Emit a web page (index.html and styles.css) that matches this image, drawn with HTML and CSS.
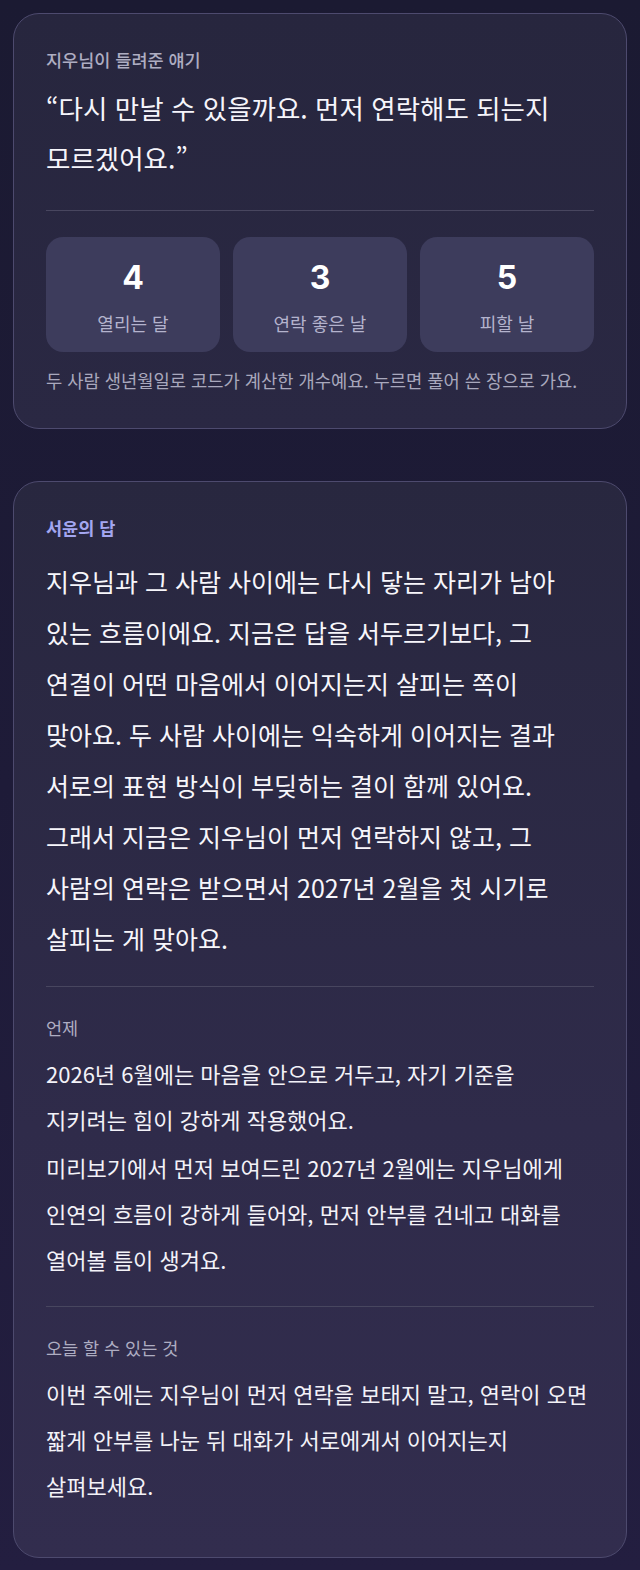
FILE: index.html
```html
<!DOCTYPE html>
<html lang="ko">
<head>
<meta charset="utf-8">
<link rel="stylesheet" href="styles.css">
</head>
<body>
<main class="page">
  <section class="card">
    <p class="label">지우님이 들려준 얘기</p>
    <p class="quote">“다시 만날 수 있을까요. 먼저 연락해도 되는지 모르겠어요.”</p>
    <hr class="divider divider-top">
    <div class="stats">
      <div class="stat"><span class="num">4</span><span class="stat-label">열리는 달</span></div>
      <div class="stat"><span class="num">3</span><span class="stat-label">연락 좋은 날</span></div>
      <div class="stat"><span class="num">5</span><span class="stat-label">피할 날</span></div>
    </div>
    <p class="note">두 사람 생년월일로 코드가 계산한 개수예요. 누르면 풀어 쓴 장으로 가요.</p>
  </section>

  <section class="card card-answer">
    <p class="label label-accent">서윤의 답</p>
    <p class="lead">지우님과 그 사람 사이에는 다시 닿는 자리가 남아 있는 흐름이에요. 지금은 답을 서두르기보다, 그 연결이 어떤 마음에서 이어지는지 살피는 쪽이 맞아요. 두 사람 사이에는 익숙하게 이어지는 결과 서로의 표현 방식이 부딪히는 결이 함께 있어요. 그래서 지금은 지우님이 먼저 연락하지 않고, 그 사람의 연락은 받으면서 2027년 2월을 첫 시기로 살피는 게 맞아요.</p>
    <hr class="divider">
    <div class="section">
      <p class="label label-sub">언제</p>
      <p class="body">2026년 6월에는 마음을 안으로 거두고, 자기 기준을 지키려는 힘이 강하게 작용했어요.</p>
      <p class="body">미리보기에서 먼저 보여드린 2027년 2월에는 지우님에게 인연의 흐름이 강하게 들어와, 먼저 안부를 건네고 대화를 열어볼 틈이 생겨요.</p>
    </div>
    <hr class="divider">
    <div class="section">
      <p class="label label-sub">오늘 할 수 있는 것</p>
      <p class="body">이번 주에는 지우님이 먼저 연락을 보태지 말고, 연락이 오면 짧게 안부를 나눈 뒤 대화가 서로에게서 이어지는지 살펴보세요.</p>
    </div>
  </section>
</main>
</body>
</html>
```

FILE: styles.css
```css
html, body {
  margin: 0;
  padding: 0;
}
body {
  background: linear-gradient(180deg, #1b1a32 0%, #1e1b38 50%, #231e40 100%);
  min-height: 1570px;
  font-family: "Noto Sans CJK KR", "Noto Sans", sans-serif;
  color: #f4f3fa;
  word-break: keep-all;
}
.page {
  padding: 13px 13px 0;
  display: flex;
  flex-direction: column;
  gap: 52px;
}
.card {
  border: 1px solid #4d4a6e;
  border-radius: 26px;
  background: linear-gradient(180deg, #27263e 0%, #2a2843 100%);
  padding: 34px 32px 36px;
}
.card-answer {
  background: linear-gradient(180deg, #28273f 0%, #2f2b4a 60%, #322d4e 100%);
  padding-bottom: 49px;
}
p { margin: 0; }
.label {
  font-size: 17.5px;
  line-height: 24px;
  color: #aeadc2;
  font-weight: 500;
}
.label-accent {
  color: #a3a6f0;
  font-weight: 700;
}
.label-sub {
  font-weight: 400;
  margin-bottom: 10px;
}
.quote {
  margin-top: 11px;
  font-size: 26.5px;
  line-height: 50px;
  color: #f6f5fb;
}
.divider {
  border: 0;
  height: 1px;
  background: #48465f;
  margin: 22px 0 29px;
}
.divider-top {
  margin: 27px 0 26px;
}
.section + .divider {
  margin-top: 24px;
}
.stats {
  display: grid;
  grid-template-columns: 1fr 1fr 1fr;
  gap: 13px;
}
.stat {
  background: #3d3c5c;
  border-radius: 17px;
  height: 115px;
  display: flex;
  flex-direction: column;
  align-items: center;
  box-sizing: border-box;
  padding-top: 21px;
}
.num {
  font-family: Inter, "Noto Sans", sans-serif;
  font-weight: 700;
  font-size: 32px;
  line-height: 40px;
  color: #ffffff;
}
.stat-label {
  margin-top: 13px;
  font-size: 18px;
  line-height: 24px;
  color: #b4b3cd;
}
.note {
  margin-top: 16px;
  font-size: 17.7px;
  line-height: 24px;
  color: #a9a8bd;
}
.lead {
  margin-top: 16px;
  font-size: 25px;
  line-height: 51px;
  color: #f7f6fb;
}
.body {
  font-size: 22px;
  line-height: 46px;
  color: #f3f2f8;
}
.body + .body {
  margin-top: 2px;
}
```
